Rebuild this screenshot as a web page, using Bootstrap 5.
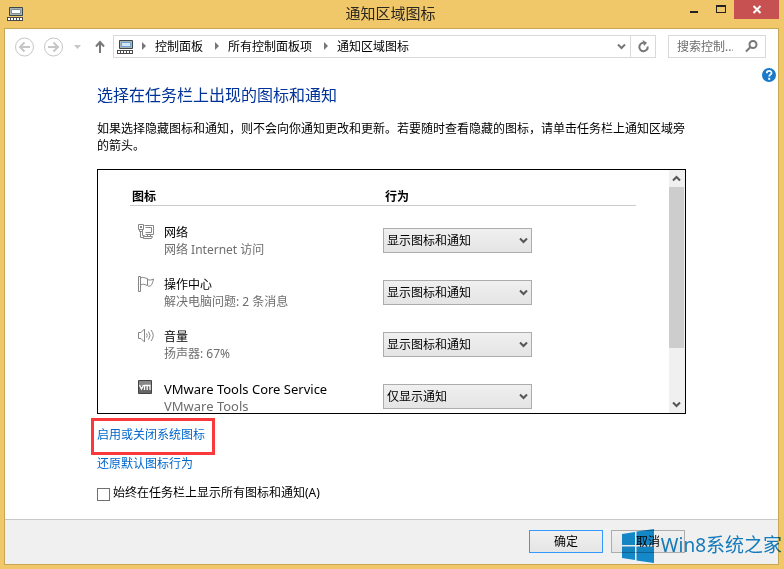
<!DOCTYPE html>
<html lang="zh-CN">
<head>
<meta charset="utf-8">
<meta name="viewport" content="width=device-width, initial-scale=1">
<title>通知区域图标</title>
<link href="https://cdn.jsdelivr.net/npm/bootstrap@5.3.0/dist/css/bootstrap.min.css" rel="stylesheet">
<style>
  body { font: 12px/18px "Noto Sans", "Noto Sans CJK SC", sans-serif; color: #000; background: #f0c869; }
  svg { display: block; flex: none; }
  .titlebar { height: 28px; padding-right: 5px; }
  .titlebar h1 { font-size: 15px; line-height: 26px; color: #2b2620; padding-left: 64px; }
  .app-icon { width: 30px; margin-left: 7px; padding-top: 7px; }
  .win-btn { border: 0; padding: 0; background: none; width: 27px; height: 19px; }
  .win-close { width: 45px; background: #c75050; }
  .frame { margin: 0 5px 4px 4px; border: 1px solid #c9a556; background: #fff; min-height: 0; }
  .toolbar { padding: 6px 12px 0 10px; }
  .nav-btn { border: 0; padding: 0; background: none; }
  .address, .search { border: 1px solid #d9d9d9; height: 23px; }
  .address { margin-left: 8px; padding-left: 3px; }
  .crumbs { gap: 12px; padding-left: 9px; }
  .crumbs a { color: #000; text-decoration: none; }
  .crumbs li { display: flex; align-items: center; gap: 9px; line-height: 17px; margin-bottom: 1px; }
  .refresh { border: 0; border-left: 1px solid #d9d9d9; background: none; width: 25px; height: 21px; padding: 0 0 0 6px; }
  .search { width: 98px; margin-left: 12px; padding: 0 7px 0 8px; }
  .search input { border: 0; padding: 0; outline: 0; min-width: 0; background: none; line-height: 20px; height: 20px; }
  .search input::placeholder { color: #6d6d6d; opacity: 1; }
  .help-row { padding: 9px 2px 0 0; }
  .main-col { padding: 0 92px; min-height: 0; }
  .main-col h2 { font-size: 16px; line-height: 20px; color: #039; margin: 3px 0 15px; }
  .intro { line-height: 17px; margin-bottom: 15px; }
  .panel { border: 1px solid #000; flex: 1 1 0; min-height: 0; overflow: hidden; }
  .panel-body { overflow: hidden; padding: 18px 33px 0 32px; }
  .icon-table { width: 100%; table-layout: fixed; }
  .icon-table th { border-bottom: 1px solid #ccc; line-height: 17px; font-weight: 700; padding: 0 2px; }
  .icon-table td { vertical-align: top; height: 52px; padding: 18px 0 0 8px; }
  .icon-table td + td { padding: 22px 0 0; }
  .item-text { margin-left: 10px; }
  .item-latin { font-size: 13px; }
  .item-sub { color: #6d6d6d; line-height: 16px; }
  .behave { appearance: none; display: block; width: 149px; height: 25px; border: 1px solid #acacac; border-radius: 0; padding: 1px 20px 0 3px; color: #000;
    background: url("data:image/svg+xml,%3Csvg xmlns='http://www.w3.org/2000/svg' width='9' height='7'%3E%3Cpath d='M1 1.5 4.5 5 8 1.5' fill='none' stroke='%23555' stroke-width='2'/%3E%3C/svg%3E") no-repeat right 3px center, linear-gradient(#f0f0f0, #e4e4e4); }
  .sbar { width: 16px; background: #f0f0f0; flex: none; }
  .sbar button { border: 0; padding: 0 0 0 3px; height: 17px; background: none; }
  .sbar-track { flex: 1; padding-right: 1px; }
  .sbar-thumb { height: 77%; background: #cdcdcd; }
  .task-link { color: #06c; text-decoration: none; align-self: flex-start; }
  .marked { position: relative; margin: 12px 0 11px; }
  .marked::after { content: ""; position: absolute; inset: -8px -10px -11px -6px; border: 3px solid #f9393c; }
  .always { margin: 11px 0 17px; }
  .always input { appearance: none; width: 13px; height: 13px; border: 1px solid #707070; margin: 4px 3px 0 0; background: #fff; }
  .always input:checked { background: #3c7fb1; }
  .actions { background: #f0f0f0; border-top: 1px solid #c8c8c8; padding: 10px 93px 11px; gap: 8px; }
  .dlg-btn { width: 74px; height: 23px; line-height: 19px; padding: 0; border: 1px solid #acacac; color: #000; background: linear-gradient(#f0f0f0, #e5e5e5); }
  .dlg-default { border-color: #3399ff; }
  .stamp { position: absolute; right: 2px; bottom: 6px; mix-blend-mode: multiply; color: #1683c6; font-size: 19px; line-height: 33px; gap: 6px; pointer-events: none; white-space: nowrap; }
</style>
<script src="https://cdn.jsdelivr.net/npm/bootstrap@5.3.0/dist/js/bootstrap.bundle.min.js"></script>
</head>
<body class="vh-100 d-flex flex-column position-relative overflow-hidden">
<svg width="0" height="0" class="position-absolute" aria-hidden="true">
  <symbol id="pc" viewBox="0 0 16 14">
    <path d="M2.500.500h13v8h-13z" fill="#a9b4b4" stroke="#3d474a"/>
    <path d="M4.500 2.500h9v4h-9z" fill="var(--scr)" stroke="var(--rim)"/>
    <path d="M0 10h16v4H0z" fill="#4a4a4a"/>
    <path d="M1 12h14" stroke="#fff" stroke-width="2" stroke-dasharray="2 1"/>
  </symbol>
  <symbol id="crumb" viewBox="0 0 4 8"><path d="M0 0l4 4-4 4z" fill="#777"/></symbol>
</svg>

<header class="titlebar d-flex">
  <div class="app-icon"><svg width="16" height="14" style="--scr:#fff;--rim:#7d8f92"><use href="#pc"/></svg></div>
  <h1 class="flex-grow-1 text-center m-0 fw-normal">通知区域图标</h1>
  <div class="d-flex">
    <button class="win-btn" aria-label="最小化"><svg width="27" height="19"><path d="M10 11h8v2h-8z" fill="#222"/></svg></button>
    <button class="win-btn" aria-label="最大化"><svg width="27" height="19"><path d="M9 5h10v8H9zm1 2v5h8V7z" fill="#222" fill-rule="evenodd"/></svg></button>
    <button class="win-btn win-close" aria-label="关闭"><svg width="45" height="19"><path d="M19.500 6l7 7m0-7l-7 7" stroke="#fff" stroke-width="2"/></svg></button>
  </div>
</header>

<div class="frame flex-grow-1 d-flex flex-column">
  <div class="toolbar d-flex align-items-start">
    <button class="nav-btn" aria-label="后退"><svg width="20" height="24" fill="none" stroke="#c6c6c6"><circle cx="9.500" cy="12" r="9"/><path d="M15 12H5.500M9.500 7.500L5 12l4.500 4.500" stroke-width="2"/></svg></button>
    <button class="nav-btn ms-2" aria-label="前进"><svg width="20" height="24" fill="none" stroke="#c6c6c6"><circle cx="10.500" cy="12" r="9"/><path d="M5 12h9.500M10.500 7.500L15 12l-4.500 4.500" stroke-width="2"/></svg></button>
    <button class="nav-btn ms-2" aria-label="最近浏览的位置"><svg width="16" height="24"><path d="M3 10h7l-3.500 4z" fill="#c6c6c6"/></svg></button>
    <button class="nav-btn ms-1" aria-label="上移"><svg width="14" height="24" fill="none" stroke="#777" stroke-width="2"><path d="M9 18V7M5 11.500L9 7l4 4.500"/></svg></button>
    <div class="address flex-grow-1 d-flex align-items-center">
      <svg width="16" height="14" style="--scr:#d5e7f7;--rim:#6ea3d4"><use href="#pc"/></svg>
      <nav class="flex-grow-1" aria-label="地址">
        <ol class="crumbs list-unstyled d-flex m-0">
          <li><svg width="4" height="8"><use href="#crumb"/></svg><a href="#">控制面板</a></li>
          <li><svg width="4" height="8"><use href="#crumb"/></svg><a href="#">所有控制面板项</a></li>
          <li><svg width="4" height="8"><use href="#crumb"/></svg><a href="#">通知区域图标</a></li>
        </ol>
      </nav>
      <svg width="9" height="7" class="me-1"><path d="M1 1.500L4.500 5 8 1.500" fill="none" stroke="#777" stroke-width="2"/></svg>
      <button class="refresh" aria-label="刷新"><svg width="13" height="13" fill="none" stroke="#777" stroke-width="2"><path d="M6.500 2.800A4.200 4.200 0 1 0 10.700 6.500"/><path d="M5.500 0l4.500 2.800-3 3.200z" fill="#777" stroke="none"/></svg></button>
    </div>
    <div class="search d-flex align-items-center">
      <input class="flex-grow-1 w-100" type="search" aria-label="搜索控制面板" placeholder="搜索控制...">
      <svg width="13" height="13" fill="none" stroke="#777"><circle cx="8" cy="4.500" r="3.500" stroke-width="2"/><path d="M5.500 7L1 11.500" stroke-width="2"/></svg>
    </div>
  </div>
  <div class="help-row d-flex justify-content-end">
    <a href="#" aria-label="帮助"><svg width="14" height="14"><circle cx="7" cy="7" r="7" fill="#1979ca"/><path d="M4.800 5.200C4.800 2.200 9.500 2.200 9.500 4.900 9.500 6.600 7.200 6.600 7.200 8.600" fill="none" stroke="#fff" stroke-width="1.800"/><path d="M6.200 9.800h2v2h-2z" fill="#fff"/></svg></a>
  </div>

  <main class="main-col flex-grow-1 d-flex flex-column">
    <h2 class="fw-normal">选择在任务栏上出现的图标和通知</h2>
    <p class="intro">如果选择隐藏图标和通知，则不会向你通知更改和更新。若要随时查看隐藏的图标，请单击任务栏上通知区域旁的箭头。</p>
    <div class="panel d-flex">
      <div class="panel-body flex-grow-1">
        <table class="icon-table">
          <thead><tr><th scope="col">图标</th><th scope="col">行为</th></tr></thead>
          <tbody>
            <tr>
              <td><div class="d-flex">
                <svg width="16" height="16" fill="none" stroke="#868686"><path d="M6.500 1.500h9v9h-8M7.500 3.500h6v5h-6"/><path d="M.5.500h5v5h-5zM2.500 2v2M3.500 2v2M1.500 5.500v2h3v-2M2.500 7.500v6h3M4.500 7.500v4h2"/><path d="M9.500 10.500v2M12.500 10.500v2M5.500 12.500h9l-1 2h-8z"/></svg>
                <div class="item-text"><label for="b1" class="d-block">网络</label><div class="item-sub">网络 Internet 访问</div></div>
              </div></td>
              <td><select id="b1" class="behave"><option>显示图标和通知</option><option>仅显示通知</option></select></td>
            </tr>
            <tr>
              <td><div class="d-flex">
                <svg width="16" height="16" fill="none" stroke="#868686"><path d="M.5.500h2v15h-2zM2.500 2C5 .500 6.500 2 9.500 2.500v7C6.500 8.500 5 7.500 2.500 9M9.500 3.500c2 1 4 .500 6-.5-.5 3-1.500 5-2.500 6.500-1.500 1-2.500 1-3.500 0"/></svg>
                <div class="item-text"><label for="b2" class="d-block">操作中心</label><div class="item-sub">解决电脑问题: 2 条消息</div></div>
              </div></td>
              <td><select id="b2" class="behave"><option>显示图标和通知</option><option>仅显示通知</option></select></td>
            </tr>
            <tr>
              <td><div class="d-flex">
                <svg width="16" height="16" fill="none" stroke="#868686"><path d="M.5 4.500h2.500L6.500 1v13L3 10.500H.5z"/><path d="M8.500 5.500q1.500 2 0 4M10.500 3.500q3 4 0 8M13 2q4.500 5.500 0 11"/></svg>
                <div class="item-text"><label for="b3" class="d-block">音量</label><div class="item-sub">扬声器: 67%</div></div>
              </div></td>
              <td><select id="b3" class="behave"><option>显示图标和通知</option><option>仅显示通知</option></select></td>
            </tr>
            <tr>
              <td><div class="d-flex">
                <svg width="16" height="16"><path d="M.5.500h13v13H.5z" fill="#666" stroke="#444"/><path d="M1 1h12v5H1z" fill="#888"/><path d="M1.500 5l2 4 2-4M6.500 10V5.500h5.500V10M9.200 5.500V10" fill="none" stroke="#fff" stroke-width="1.300"/></svg>
                <div class="item-text item-latin"><label for="b4" class="d-block">VMware Tools Core Service</label><div class="item-sub">VMware Tools</div></div>
              </div></td>
              <td><select id="b4" class="behave"><option>仅显示通知</option><option>显示图标和通知</option></select></td>
            </tr>
          </tbody>
        </table>
      </div>
      <div class="sbar d-flex flex-column">
        <button aria-label="向上滚动"><svg width="9" height="7"><path d="M1 5.500L4.500 2 8 5.500" fill="none" stroke="#555" stroke-width="2"/></svg></button>
        <div class="sbar-track"><div class="sbar-thumb"></div></div>
        <button aria-label="向下滚动"><svg width="9" height="7"><path d="M1 1.500L4.500 5 8 1.500" fill="none" stroke="#555" stroke-width="2"/></svg></button>
      </div>
    </div>
    <a href="#" class="task-link marked">启用或关闭系统图标</a>
    <a href="#" class="task-link">还原默认图标行为</a>
    <div class="always d-flex"><input type="checkbox" id="always"><label for="always">始终在任务栏上显示所有图标和通知(A)</label></div>
  </main>

  <footer class="actions d-flex justify-content-end">
    <button class="dlg-btn dlg-default">确定</button>
    <button class="dlg-btn">取消</button>
  </footer>
</div>

<div class="stamp d-flex">
  <svg width="34" height="34" fill="#1591d5"><path d="M1 5l13-2v13H1zM15.500 2.500L33 0v16H15.500zM1 17.500h13V31L1 29zM15.500 17.500H33V34l-17.500-2.500z"/></svg>
  <span>Win8系统之家</span>
</div>
</body>
</html>
